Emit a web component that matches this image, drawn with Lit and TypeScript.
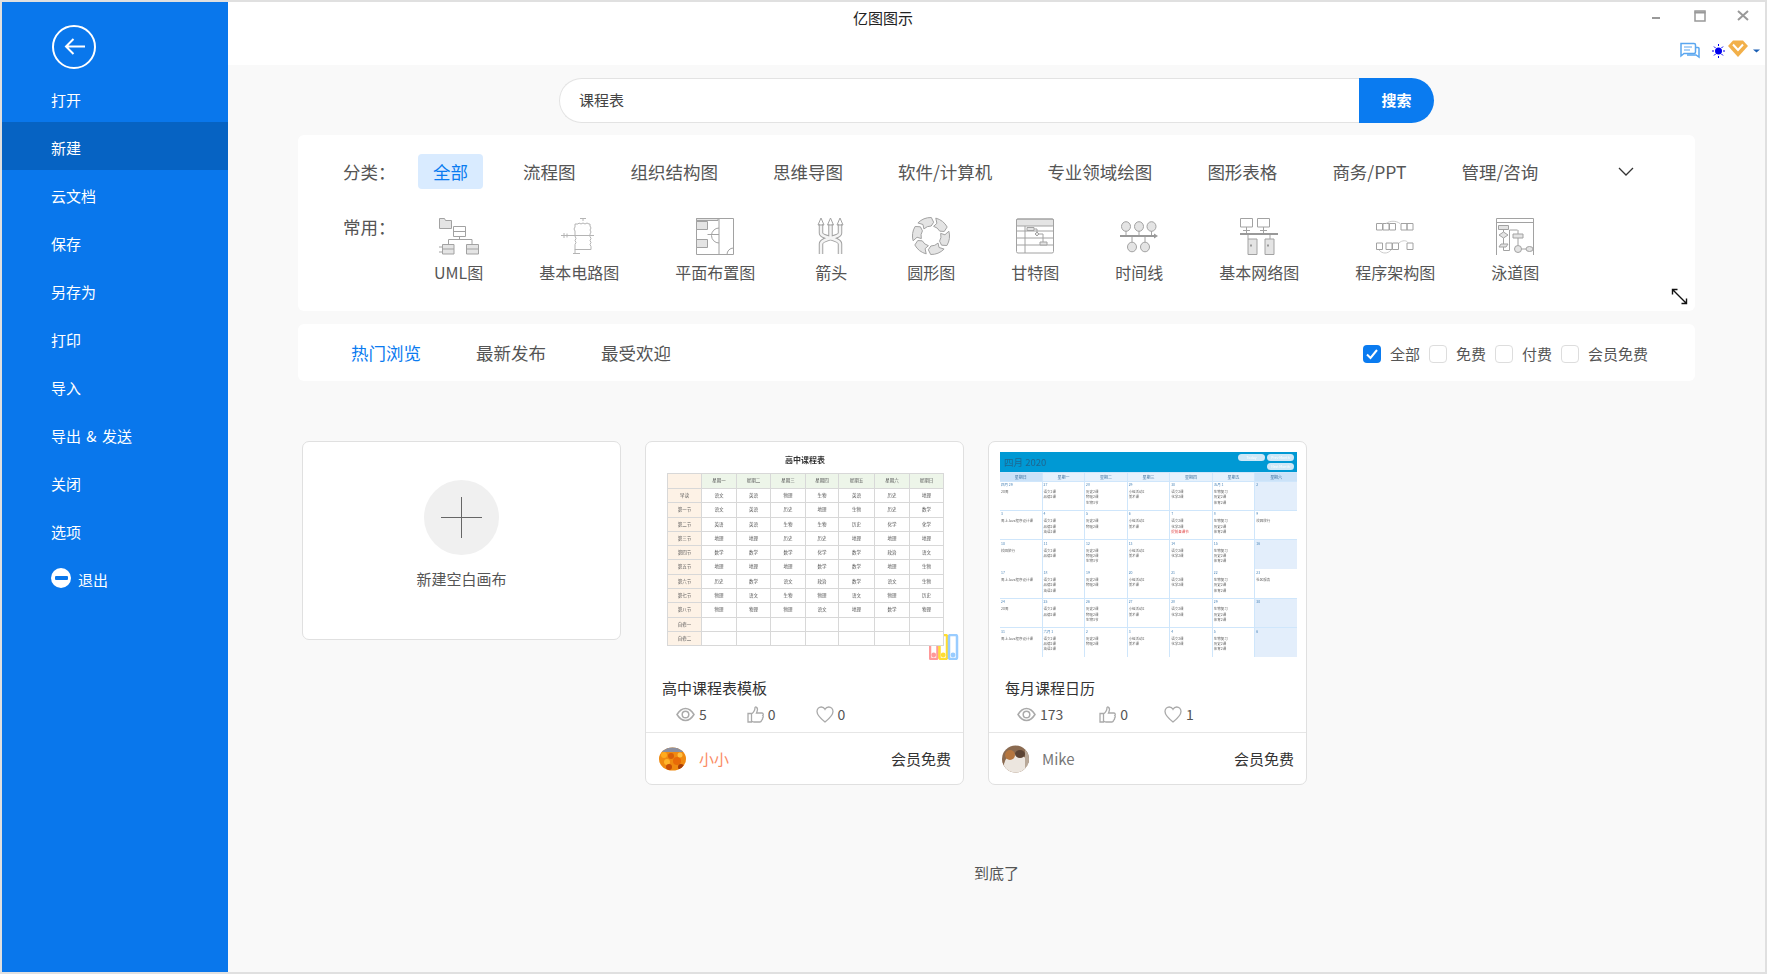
import { LitElement, css, html, svg } from 'lit';
import { customElement } from 'lit/decorators.js';

const NAV = ['打开', '新建', '云文档', '保存', '另存为', '打印', '导入', '导出 & 发送', '关闭', '选项'];
const CATS = ['全部', '流程图', '组织结构图', '思维导图', '软件/计算机', '专业领域绘图', '图形表格', '商务/PPT', '管理/咨询'];
const TABS = ['热门浏览', '最新发布', '最受欢迎'];
const CHECKS = ['全部', '免费', '付费', '会员免费'];

// Ring of chevrons for the circle chart icon
function ringSegments() {
  const pt = (r: number, deg: number) => {
    const a = (deg * Math.PI) / 180;
    return `${(19 + r * Math.cos(a)).toFixed(2)} ${(19 + r * Math.sin(a)).toFixed(2)}`;
  };
  return [0, 60, 120, 180, 240, 300].map((d) => {
    const a = d - 15;
    return svg`<path d="M${pt(18.5, a)} A18.5 18.5 0 0 1 ${pt(18.5, a + 46)} L${pt(14, a + 56)} L${pt(10, a + 46)} A10 10 0 0 0 ${pt(10, a)} L${pt(14, a + 10)} Z"/>`;
  });
}

const ICONS = [
  {
    label: 'UML图',
    w: 40,
    art: svg`<path class="f" d="M.5 1.5h5l1 2h6v8H.5z"/><path d="M14.5 9.5h12v10h-12zM14.5 14.5h12M20.5 19.5v3M9.5 27v-4.500h23.500V27"/>
      <path class="f" d="M3.500 27.500h11.500v9.500H3.500zM27.500 27.500h12v9.500h-12z"/><path d="M3.500 32h11.500M27.500 32h12M0 30h3.500M0 35h3.500"/>`,
  },
  {
    label: '基本电路图',
    w: 36,
    art: svg`<path class="lt2" d="M22 1v3M19 1.500h6M14 7h3l1-1 2 1 2-1 2 1 2-1 2 1h1v2l1 2-1 2 1 2-1 2v2.500l1 2-1 2 1 2-1 2 1 2v3H14v-5l1-2-1-2 1-2-1-2.500V14l-1-2 1-2zM0 18.500h33M3 16v5M6 16.500v4M14 32v4M12 36.500h7"/>`,
  },
  {
    label: '平面布置图',
    w: 38,
    art: svg`<path d="M.5 1.500h37v36H.5zM23 1.500v36"/><path class="f" d="M.5 1.500H22v2H.5zM.5 4.500h11v8H.5zM.5 22.500h11v8H.5z"/><path d="M23 11a7.500 7.500 0 0 0 0 15M37.500 31a6.500 6.500 0 0 0-6.500 6.500M11.500 17.500H23"/>`,
  },
  {
    label: '箭头',
    w: 40,
    art: svg`<g transform="translate(7 0)"><g class="dbl"><path d="M3 7v9c0 5 19 5 19 11v10M22 7v9c0 5-19 5-19 11v10M12.500 7v13"/></g><g class="dbl2"><path d="M3 7v9c0 5 19 5 19 11v10M22 7v9c0 5-19 5-19 11v10M12.500 7v13"/></g><path d="M0 8l3-7 3 7zM9.500 8l3-7 3 7zM19 8l3-7 3 7z"/></g>`,
  },
  { label: '圆形图', w: 38, art: svg`<g class="f">${ringSegments()}</g>` },
  {
    label: '甘特图',
    w: 38,
    art: svg`<rect class="f" x=".5" y="2" width="37" height="7" rx="1"/><rect x=".5" y="2" width="37" height="34" rx="1.500"/><path d="M.5 14h37M.5 21h37M.5 28h37M9 9v27"/><path class="f" d="M11 10.500h7v3h-7zM24 25h7v3h-7zM19 17l2-2 2 2-2 2z"/><path d="M18 12h3v3M23 17h4v8"/>`,
  },
  {
    label: '时间线',
    w: 38,
    art: svg`<ellipse cx="6" cy="9.500" rx="4.500" ry="4.800" class="f"/><ellipse cx="19" cy="9.500" rx="4.500" ry="4.800" class="f"/><ellipse cx="31.500" cy="9.500" rx="4.500" ry="4.800" class="f"/><ellipse cx="12" cy="30" rx="4.500" ry="4.800" class="f"/><ellipse cx="25" cy="30" rx="4.500" ry="4.800" class="f"/>
      <path d="M6 14v5M19 14v5M31.500 14v5M12 19v6M25 19v6"/><path class="bar" d="M0 19h36"/><path class="solid" d="M34 16.500l4 2.500-4 2.500z"/>`,
  },
  {
    label: '基本网络图',
    w: 38,
    art: svg`<path d="M.5 1.500h12v8.500H.5zM17.500 1.500h12v8.500h-12zM6.500 10v7M23.500 10v7M3 13.500h7M20 13.500h7M8 17v5M30 17v5"/><path class="bar" d="M0 17h38"/><path class="f" d="M8 22h9v15.500H8zM25 22h9v15.500h-9z"/><path class="solid" d="M10 27.500h2v2h-2zM27 27.500h2v2h-2z"/>`,
  },
  {
    label: '程序架构图',
    w: 38,
    art: svg`<path d="M.5 6.500h6v6.500h-6zM7 6.500h6v6.500H7zM13.500 6.500h6v6.500h-6zM25 6.500h6v6.500h-6zM31 6.500h6v6.500h-6zM.5 26h6v6.500h-6zM10 26h6v6.500h-6zM16.500 26h6v6.500h-6zM31 26h6v6.500h-6z"/><path class="lt" d="M10 6.500c4-3 10-3 14 0M3 33c3 4 9 4 12 0M23 26c3-3 8-3 9 0"/>`,
  },
  {
    label: '泳道图',
    w: 38,
    art: svg`<path d="M.5 1.500h37v37H.5zM.5 5.500h37"/><path class="f" d="M2.500 8.500h10v4h-10zM3 18l4.500-3 4.500 3-4.500 3zM3 30l2-3h7l-2 3z"/><path d="M7.500 12.500v2.500M7.500 21v6M7.500 30v3.500h6V13h8"/><path class="f" d="M17 17h10v4H17z"/><path d="M22 13v4M22 21v7"/><circle cx="22" cy="32" r="3.500" class="f"/><path d="M25.500 32h5"/><ellipse cx="33.500" cy="32" rx="3.500" ry="2.500" class="f"/>`,
  },
];

const TABLE_HEAD = ['', '星期一', '星期二', '星期三', '星期四', '星期五', '星期六', '星期日'];
const TABLE_ROWS = [
  ['早读', '语文', '英语', '物理', '生物', '英语', '历史', '地理'],
  ['第一节', '语文', '英语', '历史', '地理', '生物', '历史', '数学'],
  ['第二节', '英语', '英语', '生物', '生物', '历史', '化学', '化学'],
  ['第三节', '地理', '地理', '历史', '历史', '地理', '地理', '地理'],
  ['第四节', '数学', '数学', '数学', '化学', '数学', '政治', '语文'],
  ['第五节', '地理', '地理', '地理', '数学', '数学', '地理', '生物'],
  ['第六节', '历史', '数学', '语文', '政治', '数学', '语文', '生物'],
  ['第七节', '物理', '语文', '生物', '物理', '语文', '物理', '历史'],
  ['第八节', '物理', '物理', '物理', '语文', '地理', '数学', '物理'],
  ['自修一', '', '', '', '', '', '', ''],
  ['自修二', '', '', '', '', '', '', ''],
];
const TABLE_COLS = '34px 35px 34px 35px 33px 36px 35px 34px';

const CAL_HEAD = ['星期日', '星期一', '星期二', '星期三', '星期四', '星期五', '星期六'];
const CAL_DAYS = [
  ['四月 29', '27', '28', '29', '30', '五月 1', '2'],
  ['3', '4', '5', '6', '7', '8', '9'],
  ['10', '11', '12', '13', '14', '15', '16'],
  ['17', '18', '19', '20', '21', '22', '23'],
  ['24', '25', '26', '27', '28', '29', '30'],
  ['31', '六月 1', '2', '3', '4', '5', '6'],
];
const FIRST_COL = [['20周'], ['周上Java程序设计课'], ['校园旅行'], ['周上Java程序设计课'], ['20周'], ['周上Java程序设计课']];
const LAST_COL = [[], ['校园旅行'], [], ['社区服务'], [], []];
const MID_COLS = [
  ['语文2课', '品德2课', '英语2课'],
  ['历史2课', '物理2课', '生物3节'],
  ['小组活动2', '美术课'],
  ['语文2课', '化学2课'],
  ['生物复习', '历史2课', '体育2课'],
];

function calEvents(row: number, col: number): string[] {
  if (col === 0) return FIRST_COL[row];
  if (col === 6) return LAST_COL[row];
  const list = MID_COLS[col - 1];
  if (col === 1 && row % 2 === 0) return list.slice(0, 2);
  if (col === 2 && row % 2 === 1) return list.slice(0, 2);
  return list;
}

const EYE = svg`<svg width="19" height="15" viewBox="0 0 19 15" fill="none" stroke="#aaa" stroke-width="1.500"><path d="M1 7.500C3.500 3.500 6 1.500 9.500 1.500s6 2 8.500 6c-2.500 4-5 6-8.500 6S3.500 11.500 1 7.500z"/><circle cx="9.500" cy="7.500" r="3.300"/></svg>`;
const THUMB = svg`<svg width="17" height="17" viewBox="0 0 17 17" fill="none" stroke="#aaa" stroke-width="1.300"><path d="M1 7.500h3.500V16H1zM4.500 8C6.500 6.500 8 4 8 1.500c0-1 2.500-.8 2.500 1.500 0 1.500-.5 3-1 4h5.500c1.500 0 1.500 2 .8 2.500.7.800.5 2-.3 2.500.3 1-.2 2-1 2.300 0 1-.7 1.700-1.500 1.700H7c-1 0-1.800-.5-2.500-1"/></svg>`;
const HEART = svg`<svg width="18" height="17" viewBox="0 0 18 17" fill="none" stroke="#aaa" stroke-width="1.300"><path d="M9 16C4 12 1 9 1 5.500 1 3 3 1 5.300 1 7 1 8.300 2 9 3.300 9.700 2 11 1 12.700 1 15 1 17 3 17 5.500 17 9 14 12 9 16z"/></svg>`;

@customElement('app-root')
export class AppRoot extends LitElement {
  static styles = css`
    :host {
      display: block;
      font-family: 'Noto Sans CJK SC', 'Noto Sans', sans-serif;
      font-size: 15px;
      color: #555;
    }

    .window {
      box-sizing: border-box;
      display: flex;
      width: 1767px;
      height: 974px;
      overflow: hidden;
      border: 2px solid #e0e0e0;
      background: #f9f9f9;
    }

    /* sidebar */
    .side {
      flex: none;
      width: 226px;
      padding-top: 23px;
      background: #0977ec;
      color: #fff;
    }
    .back {
      display: block;
      width: 44px;
      height: 44px;
      margin: 0 0 5px 50px;
    }
    .nav-item {
      box-sizing: border-box;
      display: flex;
      align-items: center;
      gap: 7px;
      height: 48px;
      padding: 4px 0 0 49px;
      line-height: 20px;
      white-space: pre;
      word-spacing: 2px;
    }
    .nav-item.active {
      background: #0663c3;
    }
    .exit-dot {
      position: relative;
      width: 20px;
      height: 20px;
      margin-top: -5px;
      border-radius: 50%;
      background: #fff;
    }
    .exit-dot::after {
      content: '';
      position: absolute;
      left: 3.500px;
      top: 8px;
      width: 13px;
      height: 4px;
      border-radius: 1px;
      background: #0977ec;
    }

    /* main */
    .main {
      flex: 1;
      min-width: 0;
    }
    .top {
      box-sizing: border-box;
      position: relative;
      height: 63px;
      padding: 4px 0 0 625px;
      background: #fff;
      color: #222;
      line-height: 24px;
    }
    .win-ctl {
      position: absolute;
      left: 0;
      top: 0;
    }
    .content {
      padding: 13px 70px 0;
    }
    .search {
      display: flex;
      width: 875px;
      height: 45px;
      margin-left: 261px;
    }
    .search-box {
      flex: 1;
      box-sizing: border-box;
      padding-left: 19px;
      border: 1px solid #e3e3e3;
      border-right: none;
      border-radius: 23px 0 0 23px;
      background: #fff;
      line-height: 41px;
      color: #444;
    }
    .search-btn {
      width: 75px;
      border-radius: 0 23px 23px 0;
      background: #0a7bf0;
      color: #fff;
      font-weight: 700;
      text-align: center;
      line-height: 43px;
    }

    .card {
      position: relative;
      border-radius: 6px;
      background: #fff;
    }
    .filters {
      box-sizing: border-box;
      height: 176px;
      margin-top: 12px;
      padding: 19px 0 0 45px;
    }
    .row {
      display: flex;
    }
    .row-label {
      flex: none;
      width: 75px;
      font-size: 17.500px;
      line-height: 35px;
    }
    .cats {
      display: flex;
      flex: 1;
      gap: 25px;
      font-size: 17.500px;
      line-height: 35px;
      white-space: nowrap;
    }
    .cat {
      padding: 0 15px;
      border-radius: 4px;
    }
    .cat.on {
      background: #d9ebff;
      color: #0a7bf0;
    }
    .chevron {
      margin: 0 61px 0 auto;
      align-self: center;
    }
    .common {
      margin-top: 28px;
    }
    .common .row-label {
      width: 91px;
      line-height: 19px;
    }
    .items {
      display: flex;
      gap: 56px;
    }
    .item {
      display: flex;
      flex-direction: column;
      align-items: center;
      min-width: 40px;
      font-size: 16px;
      line-height: 24px;
      white-space: nowrap;
    }
    .item svg {
      display: block;
      height: 38px;
      margin-bottom: 5px;
      fill: none;
      stroke: #a2a2a2;
      stroke-width: 1;
    }
    .item svg .f {
      fill: #e4e4e4;
    }
    .item svg .lt {
      stroke: #ccc;
    }
    .item svg .lt2 {
      stroke: #b4b4b4;
    }
    .item svg .bar {
      stroke: #999;
      stroke-width: 2;
    }
    .item svg .solid {
      fill: #999;
      stroke: none;
    }
    .item svg .dbl {
      stroke-width: 4.500;
    }
    .item svg .dbl2 {
      stroke: #f4f4f4;
      stroke-width: 2.500;
    }
    .expand {
      position: absolute;
      right: 7px;
      bottom: 6px;
      display: block;
    }

    .tabs {
      display: flex;
      align-items: center;
      height: 57px;
      margin-top: 13px;
      padding: 0 47px 0 53px;
      font-size: 17.500px;
    }
    .tab + .tab {
      margin-left: 55px;
    }
    .tab.on {
      color: #0a7bf0;
    }
    .checks {
      display: flex;
      align-items: center;
      margin: 1px 0 0 auto;
      font-size: 15px;
    }
    .check {
      box-sizing: border-box;
      width: 18px;
      height: 18px;
      margin: 2px 9px 0 0;
      border: 1px solid #ddd;
      border-radius: 4px;
      background: #fff;
    }
    .check + span {
      margin-right: 9px;
    }
    .check + span:last-child {
      margin-right: 0;
    }
    .check.on {
      border: none;
      background: #0a7bf0;
    }
    .check svg {
      display: block;
    }

    /* gallery */
    .gallery {
      display: flex;
      align-items: flex-start;
      gap: 24px;
      margin-top: 60px;
      padding-left: 4px;
    }
    .tile {
      box-sizing: border-box;
      width: 319px;
      border: 1px solid #e0e0e0;
      border-radius: 7px;
      background: #fff;
    }
    .blank {
      display: flex;
      flex-direction: column;
      align-items: center;
      height: 199px;
      padding-top: 38px;
    }
    .plus {
      position: relative;
      width: 75px;
      height: 75px;
      border-radius: 50%;
      background: #f0f0f0;
    }
    .plus::before,
    .plus::after {
      content: '';
      position: absolute;
      background: #666;
    }
    .plus::before {
      left: 17px;
      top: 37px;
      width: 41px;
      height: 1px;
    }
    .plus::after {
      left: 37px;
      top: 17px;
      width: 1px;
      height: 41px;
    }
    .blank-text {
      margin-top: 12px;
      line-height: 24px;
    }

    .thumb {
      position: relative;
      height: 235px;
      overflow: hidden;
      border-radius: 7px 7px 0 0;
    }
    .tile-title {
      padding-left: 16px;
      color: #333;
      line-height: 22px;
    }
    .stats {
      display: flex;
      align-items: center;
      height: 26px;
      margin-top: 2px;
      padding-left: 30px;
      gap: 40px;
      line-height: 26px;
      font-size: 14px;
    }
    .stats.tight {
      padding-left: 28px;
      gap: 36px;
    }
    .stat {
      display: flex;
      align-items: center;
      gap: 4px;
    }
    .stat svg {
      display: block;
    }
    .foot {
      display: flex;
      align-items: center;
      height: 51px;
      margin-top: 5px;
      padding: 0 12px 0 13px;
      border-top: 1px solid #e6e6e6;
    }
    .avatar {
      display: block;
      flex: none;
      margin-right: 13px;
    }
    .author {
      color: #777;
    }
    .author.hot {
      color: #fa8a62;
    }
    .price {
      margin-left: auto;
      color: #333;
    }
    .end {
      margin-top: 76px;
      text-align: center;
      line-height: 24px;
    }

    /* first thumbnail: timetable */
    .sheet {
      padding-left: 21px;
      filter: blur(0.4px);
      color: #555;
    }
    .sheet-title {
      width: 276px;
      height: 31px;
      text-align: center;
      font-size: 8px;
      font-weight: 700;
      line-height: 35px;
      color: #333;
    }
    .sheet-grid {
      display: grid;
      width: max-content;
      background: #fff;
      border-top: 1px solid #d8d8d8;
      border-left: 1px solid #d8d8d8;
    }
    .sheet-grid > div {
      box-sizing: border-box;
      height: 14.300px;
      border-right: 1px solid #d8d8d8;
      border-bottom: 1px solid #d8d8d8;
      text-align: center;
      font-size: 4.500px;
      line-height: 13px;
    }
    .sheet-grid .hd,
    .sheet-grid .corner {
      height: 15px;
      background: #edf5e9;
    }
    .sheet-grid .corner,
    .sheet-grid .sd {
      background: #fdf2e6;
    }
    .binders {
      position: absolute;
      left: 283px;
      top: 192px;
      display: block;
    }

    /* second thumbnail: calendar */
    .cal {
      width: 297px;
      margin: 10px 0 0 11px;
      filter: blur(0.3px);
      background: #cfe6fb;
    }
    .cal-head {
      position: relative;
      box-sizing: border-box;
      height: 20px;
      padding-left: 4px;
      background: #0099d4;
      color: #1f668f;
      font-size: 9.500px;
      line-height: 21px;
    }
    .cal-btns {
      position: absolute;
      right: 3px;
      top: 2px;
      display: grid;
      grid-template-columns: 27px 27px;
      justify-items: end;
      gap: 2px 2px;
    }
    .cal-btn {
      width: 27px;
      height: 7px;
      border-radius: 4px;
      background: #cfe8f7;
      color: #fff;
      font-size: 3.500px;
      line-height: 7px;
      text-align: center;
    }
    .cal-grid {
      display: grid;
      grid-template-columns: repeat(7, 1fr);
      gap: 0.8px;
      padding: 0.8px 0;
    }
    .cal-th {
      height: 8px;
      background: #e6f1fc;
      text-align: center;
      font-size: 4px;
      line-height: 8px;
      color: #3b6f9e;
    }
    .cal-th.edge {
      background: #cbe2f8;
    }
    .cal-td {
      box-sizing: border-box;
      height: 28.500px;
      padding: 0.5px 1px;
      overflow: hidden;
      background: #fff;
      font-size: 3.500px;
      line-height: 5.300px;
      color: #666;
      white-space: nowrap;
    }
    .cal-td.tint {
      background: #e3eefb;
    }
    .cal-day {
      height: 7px;
      color: #4d86b8;
    }
    .cal-red {
      color: #e04040;
    }
  `;

  private renderTimetable() {
    return html`
      <svg class="binders" width="30" height="26" viewBox="0 0 30 26">
        <g fill="none" stroke-width="2.500">
          <rect x="1" y="9" width="7.500" height="16" rx="1.500" stroke="#f99"/>
          <rect x="10.500" y="1" width="7.500" height="24" rx="1.500" stroke="#fd3"/>
          <rect x="20" y="1" width="8" height="24" rx="1.500" stroke="#9cf"/>
        </g>
        <circle cx="4.700" cy="21" r="2.400" fill="#f99"/><circle cx="14.200" cy="21" r="2.400" fill="#fd3"/><circle cx="24" cy="21" r="2.400" fill="#9cf"/>
      </svg>
      <div class="sheet">
        <div class="sheet-title">高中课程表</div>
        <div class="sheet-grid" style="grid-template-columns:${TABLE_COLS}">
          ${TABLE_HEAD.map((t, i) => html`<div class=${i ? 'hd' : 'corner'}>${t}</div>`)}
          ${TABLE_ROWS.map((r) => r.map((t, i) => html`<div class=${i ? '' : 'sd'}>${t}</div>`))}
        </div>
      </div>
    `;
  }

  private renderCalendar() {
    return html`
      <div class="cal">
        <div class="cal-head">
          四月 2020
          <div class="cal-btns">
            <div class="cal-btn">Today</div>
            <div class="cal-btn">Prev Month</div>
            <div></div>
            <div class="cal-btn">Next Month</div>
          </div>
        </div>
        <div class="cal-grid">
          ${CAL_HEAD.map((t, i) => html`<div class="cal-th ${i === 0 || i === 6 ? 'edge' : ''}">${t}</div>`)}
          ${CAL_DAYS.map((week, row) =>
            week.map((day, col) => {
              const tint = col === 6 && row !== 1 && row !== 3;
              return html`<div class="cal-td ${tint ? 'tint' : ''}">
                <div class="cal-day">${day}</div>
                ${calEvents(row, col).map((e) => html`<div>${e}</div>`)}
                ${row === 1 && col === 4 ? html`<div class="cal-red">提前备课节</div>` : ''}
              </div>`;
            })
          )}
        </div>
      </div>
    `;
  }

  private renderTile(
    thumb: unknown,
    title: string,
    views: string,
    likes: string,
    favs: string,
    author: string,
    avatar: unknown,
    hot: boolean
  ) {
    return html`
      <div class="tile">
        <div class="thumb">${thumb}</div>
        <div class="tile-title">${title}</div>
        <div class="stats ${hot ? '' : 'tight'}">
          <span class="stat">${EYE}${views}</span>
          <span class="stat">${THUMB}${likes}</span>
          <span class="stat">${HEART}${favs}</span>
        </div>
        <div class="foot">
          ${avatar}
          <span class="author ${hot ? 'hot' : ''}">${author}</span>
          <span class="price">会员免费</span>
        </div>
      </div>
    `;
  }

  render() {
    const flower = svg`<svg class="avatar" width="27" height="28" viewBox="0 0 27 28">
      <defs><clipPath id="a1"><ellipse cx="13.500" cy="14" rx="13.500" ry="11.500"/></clipPath></defs>
      <g clip-path="url(#a1)"><rect width="27" height="28" fill="#f08a10"/><rect width="27" height="5" y="2" fill="#8b8fa0"/>
      <circle cx="5" cy="10" r="3" fill="#ffab1e"/><circle cx="12" cy="11" r="3" fill="#d85f08"/><circle cx="18" cy="16" r="4" fill="#e86a08"/><circle cx="8" cy="17" r="3" fill="#ffb52a"/><circle cx="10" cy="22" r="3" fill="#c94f06"/><circle cx="22" cy="22" r="3" fill="#a83f08"/><circle cx="21" cy="10" r="2.500" fill="#ffc040"/></g></svg>`;
    const cat = svg`<svg class="avatar" width="27" height="28" viewBox="0 0 27 28">
      <defs><clipPath id="a2"><circle cx="13.500" cy="14" r="13.500"/></clipPath></defs>
      <g clip-path="url(#a2)"><rect width="27" height="28" fill="#8a6a50"/><ellipse cx="14" cy="20" rx="12" ry="11" fill="#ece6df"/><ellipse cx="8" cy="10" rx="5" ry="5" fill="#b5763f"/><ellipse cx="18" cy="9" rx="5" ry="4" fill="#5c4434"/><rect x="23" y="0" width="4" height="28" fill="#b8a898"/></g></svg>`;

    return html`
      <div class="window">
        <aside class="side">
          <svg class="back" viewBox="0 0 44 44" fill="none" stroke="#fff" stroke-width="2">
            <circle cx="22" cy="22" r="21"/>
            <path d="M14 21.500h19M21.500 14l-7.500 7.500 7.500 7.500"/>
          </svg>
          ${NAV.map((n, i) => html`<div class="nav-item ${i === 1 ? 'active' : ''}">${n}</div>`)}
          <div class="nav-item"><span class="exit-dot"></span>退出</div>
        </aside>

        <div class="main">
          <header class="top">
            亿图图示
            <svg class="win-ctl" width="1537" height="63" viewBox="228 2 1537 63" fill="none">
              <path d="M1652 18h8" stroke="#999" stroke-width="2"/>
              <path d="M1695 11h10v10h-10z" stroke="#999" stroke-width="1.500"/>
              <path d="M1694.500 12.500h11" stroke="#999" stroke-width="2"/>
              <path d="M1738 11l10 9M1748 11l-10 9" stroke="#999" stroke-width="2"/>
              <path d="M1681 43.500h13a1.500 1.500 0 0 1 1.500 1.500v7a1.500 1.500 0 0 1-1.500 1.500h-10l-3 2.500z" stroke="#5aa6f0" stroke-width="1.500"/>
              <path d="M1684 47h8M1684 50h6" stroke="#5aa6f0"/>
              <path d="M1696 47.500h2a1 1 0 0 1 1 1v8.500l-3-2h-9" stroke="#5aa6f0" stroke-width="1.500"/>
              <circle cx="1718.500" cy="51" r="3.500" fill="#0000ee"/>
              <path d="M1718.500 44v2M1718.500 56v2M1712 51h2M1723 51h2M1714 46.500l1.500 1.500M1721.500 54l1.500 1.500M1723 46.500l-1.500 1.500M1715.500 54l-1.500 1.500" stroke="#0000ee"/>
              <path d="M1733 40.500h10l5 5.500-10 11-10-11z" fill="#f2b04a"/>
              <path d="M1733 44.500l5 5.500 5-5.500" stroke="#fff" stroke-width="2"/>
              <path d="M1753 49.500h7l-3.500 3z" fill="#1a5fb4"/>
            </svg>
          </header>

          <div class="content">
            <div class="search">
              <div class="search-box">课程表</div>
              <div class="search-btn">搜索</div>
            </div>

            <section class="card filters">
              <div class="row">
                <div class="row-label">分类：</div>
                <div class="cats">
                  ${CATS.map((c, i) => html`<span class="cat ${i === 0 ? 'on' : ''}">${c}</span>`)}
                  <svg class="chevron" width="16" height="9" viewBox="0 0 16 9" fill="none" stroke="#333" stroke-width="1.300"><path d="M1 1l7 7 7-7"/></svg>
                </div>
              </div>
              <div class="row common">
                <div class="row-label">常用：</div>
                <div class="items">
                  ${ICONS.map(
                    (it) => html`<div class="item">
                      <svg width=${it.w} viewBox="0 0 ${it.w} 38">${it.art}</svg>
                      ${it.label}
                    </div>`
                  )}
                </div>
              </div>
              <svg class="expand" width="17" height="17" viewBox="0 0 17 17" fill="none" stroke="#111" stroke-width="1.400">
                <path d="M2 2l13 13M1.500 6.500v-5h5M15.500 10.500v5h-5"/>
              </svg>
            </section>

            <section class="card tabs">
              ${TABS.map((t, i) => html`<span class="tab ${i === 0 ? 'on' : ''}">${t}</span>`)}
              <div class="checks">
                ${CHECKS.map(
                  (c, i) => html`<div class="check ${i === 0 ? 'on' : ''}">
                      ${i === 0
                        ? html`<svg width="18" height="18" viewBox="0 0 18 18" fill="none" stroke="#fff" stroke-width="2"><path d="M4 9.500l3.500 3.500 6.500-8"/></svg>`
                        : ''}
                    </div>
                    <span>${c}</span>`
                )}
              </div>
            </section>

            <section class="gallery">
              <div class="tile blank">
                <div class="plus"></div>
                <div class="blank-text">新建空白画布</div>
              </div>
              ${this.renderTile(this.renderTimetable(), '高中课程表模板', '5', '0', '0', '小小', flower, true)}
              ${this.renderTile(this.renderCalendar(), '每月课程日历', '173', '0', '1', 'Mike', cat, false)}
            </section>

            <div class="end">到底了</div>
          </div>
        </div>
      </div>
    `;
  }
}
